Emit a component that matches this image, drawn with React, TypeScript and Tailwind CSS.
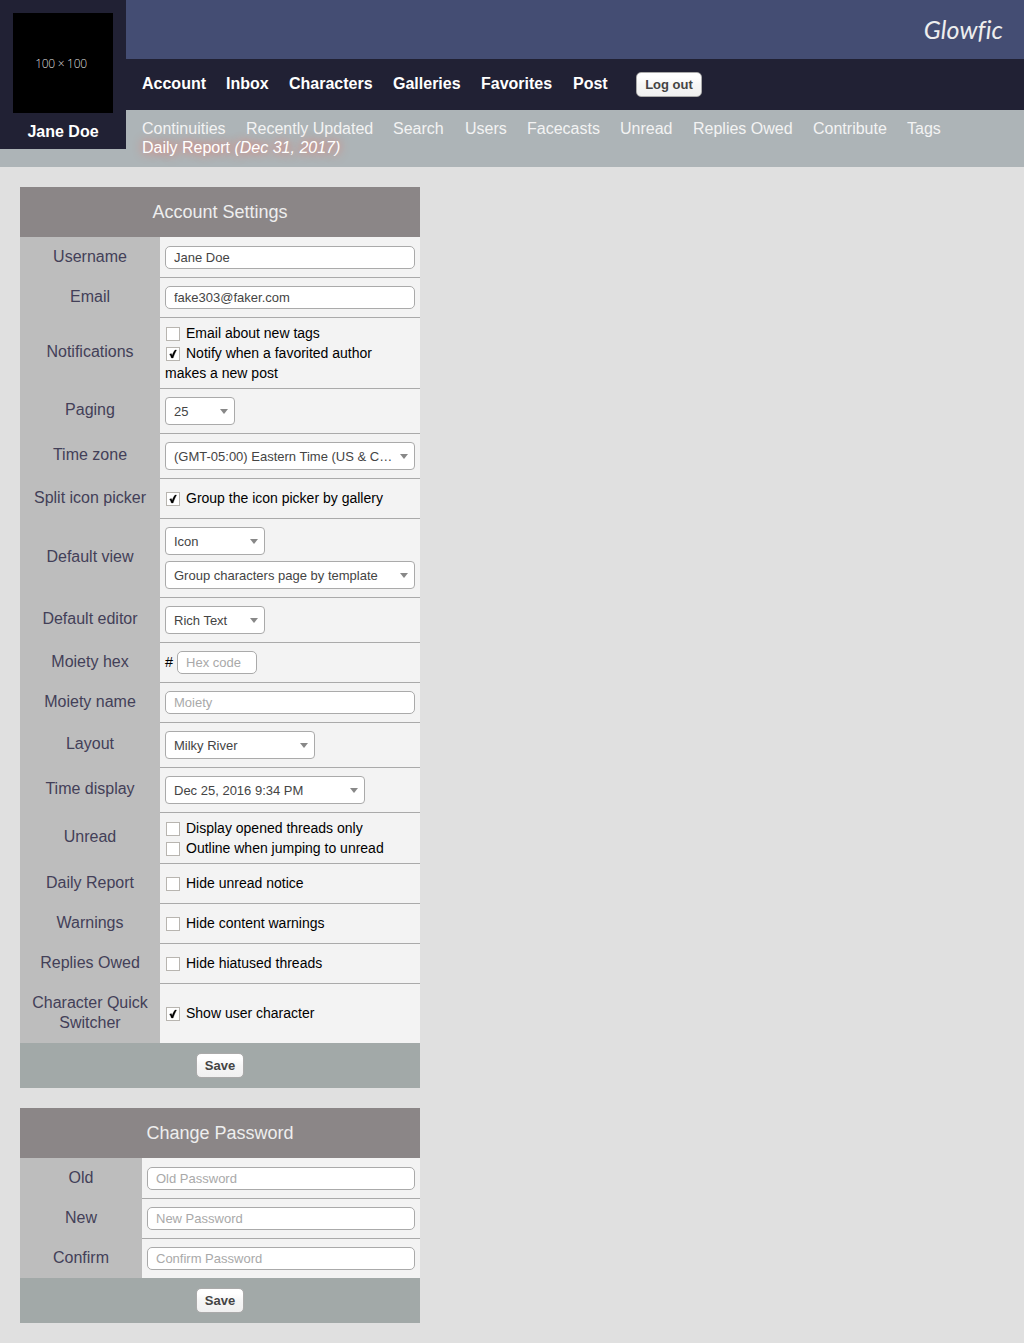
import type { ReactNode } from "react";

const mainLinks = [
  ["Account", "w-[84px]"],
  ["Inbox", "w-[63px]"],
  ["Characters", "w-[104px]"],
  ["Galleries", "w-[88px]"],
  ["Favorites", "w-[92px]"],
  ["Post", "w-[63px]"],
];

const subLinks = [
  ["Continuities", "w-[104px]"],
  ["Recently Updated", "w-[147px]"],
  ["Search", "w-[72px]"],
  ["Users", "w-[62px]"],
  ["Facecasts", "w-[93px]"],
  ["Unread", "w-[73px]"],
  ["Replies Owed", "w-[120px]"],
  ["Contribute", "w-[94px]"],
  ["Tags", "w-[40px]"],
];

function Button({ children, className = "" }: { children: ReactNode; className?: string }) {
  return (
    <button
      className={`rounded-[5px] border border-[#aaa] bg-linear-to-b from-white from-20% via-[#f6f6f6] via-50% to-[#f0f0f0] text-center text-[13px] font-bold text-[#444] ${className}`}
    >
      {children}
    </button>
  );
}

function Field({ value, placeholder, width = "w-full" }: { value?: string; placeholder?: string; width?: string }) {
  return (
    <input
      defaultValue={value}
      placeholder={placeholder}
      className={`block h-[23px] rounded-[5px] border border-[#aaa] bg-white px-2 text-[13px] leading-[21px] text-[#444] placeholder:text-[#a9a9a9] ${width}`}
    />
  );
}

function Select({ value, width = "w-full" }: { value: string; width?: string }) {
  return (
    <div className={`flex h-7 items-center rounded-[4px] border border-[#aaa] bg-white pr-[6px] pl-2 text-[13px] text-[#444] ${width}`}>
      <span className="min-w-0 flex-1 pt-px leading-[26px] whitespace-nowrap">{value}</span>
      <span className="h-0 w-0 border-x-4 border-t-5 border-x-transparent border-t-[#888]" />
    </div>
  );
}

function Check({ label, checked = false }: { label: string; checked?: boolean }) {
  return (
    <div className="text-[14px] leading-5 text-black">
      <span className="relative top-px mr-[6px] ml-px inline-block h-[14px] w-[14px] border border-[#b8b5b0] bg-white align-[-2px]">
        {checked && (
          <svg viewBox="0 0 12 12" className="absolute inset-0 h-3 w-3">
            <path d="M2.6 6.2 L4.3 5.6 L5.2 7.5 C5.9 5.2 7 3.2 8.1 2 L9.5 2 C8.2 4.4 6.9 7.4 6.1 10 L4.4 10 C4 8.6 3.4 7.4 2.6 6.2Z" fill="#000" stroke="#000" strokeWidth="0.3" />
          </svg>
        )}
      </span>
      {label}
    </div>
  );
}

type RowProps = {
  label: string;
  height: string;
  pad?: string;
  labelWidth?: string;
  first?: boolean;
  children: ReactNode;
};

function Row({ label, height, pad = "pt-2", labelWidth = "w-[140px]", first = false, children }: RowProps) {
  return (
    <div className={`flex ${height}`}>
      <div className={`flex shrink-0 items-center justify-center bg-[#bdbdbd] px-2 pb-px text-center leading-5 text-[#434058] ${labelWidth}`}>
        {label}
      </div>
      <div className={`min-w-0 flex-1 border-t bg-[#f3f3f3] px-[5px] ${first ? "border-[#f3f3f3]" : "border-[#aaa]"} ${pad}`}>
        {children}
      </div>
    </div>
  );
}

function Panel({ title, children }: { title: string; children: ReactNode }) {
  return (
    <section className="w-[400px]">
      <h2 className="h-[50px] bg-[#8b8687] text-center text-[18px] leading-[50px] text-[#eee]">{title}</h2>
      {children}
      <div className="flex h-[45px] items-center justify-center bg-[#a2a9a8]">
        <Button className="h-[25px] w-12 leading-[23px]">Save</Button>
      </div>
    </section>
  );
}

export default function App() {
  return (
    <div className="min-h-[1343px] w-[1024px] bg-[#e0e0e0] font-['Liberation_Sans',Arial,sans-serif] text-base">
      <header className="flex h-[167px] bg-[#adb4b7]">
        <div className="flex h-[149px] w-[126px] shrink-0 flex-col items-center bg-[#212134] pt-[13px]">
          <div className="flex h-[100px] w-[100px] items-center justify-center bg-black pr-1 pt-[2px] font-['Open_Sans',sans-serif] text-[12px] font-light tracking-[-0.3px] text-[#ddd]">
            100 × 100
          </div>
          <div className="mt-[9px] leading-5 font-bold text-white">Jane Doe</div>
        </div>
        <div className="flex-1">
          <div className="flex h-[59px] items-center justify-end bg-[#444d73] pr-[21px] pt-px font-[Lato,sans-serif] text-[25px] font-normal tracking-[0.1px] text-[#eee] italic">
            Glowfic
          </div>
          <nav className="flex h-[51px] items-center bg-[#212134] pl-4 font-bold text-white">
            {mainLinks.map(([name, width]) => (
              <a key={name} className={`shrink-0 pb-[2px] whitespace-nowrap ${width}`}>{name}</a>
            ))}
            <Button className="h-[25px] w-[66px] leading-[23px]">Log out</Button>
          </nav>
          <div className="pt-[9px] pl-4 leading-[19px] text-[#f3f3f3]">
            <nav className="flex">
              {subLinks.map(([name, width]) => (
                <a key={name} className={`shrink-0 whitespace-nowrap ${width}`}>{name}</a>
              ))}
            </nav>
            <a className="block text-white [text-shadow:0_0_10px_#ff6655]">
              Daily Report <i>(Dec 31, 2017)</i>
            </a>
          </div>
        </div>
      </header>
      <main className="flex flex-col gap-5 p-5">
        <Panel title="Account Settings">
          <Row label="Username" height="h-10" first><Field value="Jane Doe" /></Row>
          <Row label="Email" height="h-10"><Field value="fake303@faker.com" /></Row>
          <Row label="Notifications" height="h-[71px]" pad="pt-[5px]">
            <Check label="Email about new tags" />
            <Check label="Notify when a favorited author makes a new post" checked />
          </Row>
          <Row label="Paging" height="h-[45px]"><Select value="25" width="w-[70px]" /></Row>
          <Row label="Time zone" height="h-[45px]"><Select value="(GMT-05:00) Eastern Time (US & C…" /></Row>
          <Row label="Split icon picker" height="h-10" pad="pt-[9px]"><Check label="Group the icon picker by gallery" checked /></Row>
          <Row label="Default view" height="h-[79px]">
            <div className="flex flex-col gap-1.5">
              <Select value="Icon" width="w-[100px]" />
              <Select value="Group characters page by template" />
            </div>
          </Row>
          <Row label="Default editor" height="h-[45px]"><Select value="Rich Text" width="w-[100px]" /></Row>
          <Row label="Moiety hex" height="h-10">
            <div className="flex items-center gap-1 text-[14.4px] leading-5">
              <span className="pb-[2px]">#</span>
              <Field placeholder="Hex code" width="w-20" />
            </div>
          </Row>
          <Row label="Moiety name" height="h-10"><Field placeholder="Moiety" /></Row>
          <Row label="Layout" height="h-[45px]"><Select value="Milky River" width="w-[150px]" /></Row>
          <Row label="Time display" height="h-[45px]"><Select value="Dec 25, 2016 9:34 PM" width="w-[200px]" /></Row>
          <Row label="Unread" height="h-[51px]" pad="pt-[5px]">
            <Check label="Display opened threads only" />
            <Check label="Outline when jumping to unread" />
          </Row>
          <Row label="Daily Report" height="h-10" pad="pt-[9px]"><Check label="Hide unread notice" /></Row>
          <Row label="Warnings" height="h-10" pad="pt-[9px]"><Check label="Hide content warnings" /></Row>
          <Row label="Replies Owed" height="h-10" pad="pt-[9px]"><Check label="Hide hiatused threads" /></Row>
          <Row label="Character Quick Switcher" height="h-[60px]" pad="pt-[19px]"><Check label="Show user character" checked /></Row>
        </Panel>
        <Panel title="Change Password">
          <Row label="Old" height="h-10" labelWidth="w-[122px]" first><Field placeholder="Old Password" /></Row>
          <Row label="New" height="h-10" labelWidth="w-[122px]"><Field placeholder="New Password" /></Row>
          <Row label="Confirm" height="h-10" labelWidth="w-[122px]"><Field placeholder="Confirm Password" /></Row>
        </Panel>
      </main>
    </div>
  );
}
